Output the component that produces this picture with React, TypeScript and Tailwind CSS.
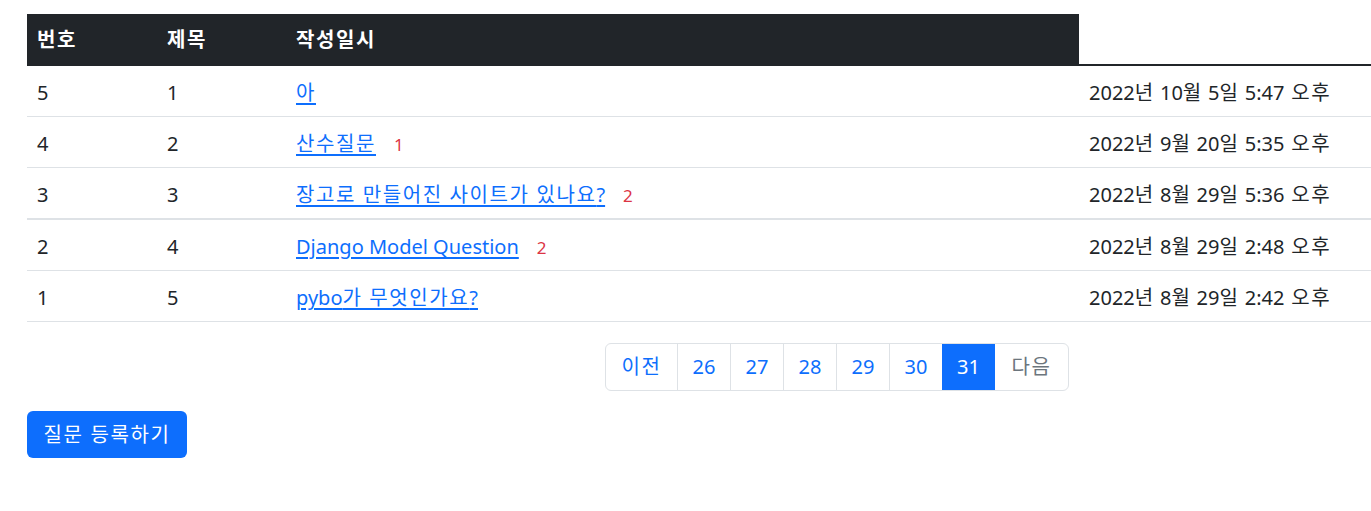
const ROWS = [
  { num: 5, idx: 1, title: '아', answers: 0, date: '2022년 10월 5일 5:47 오후' },
  { num: 4, idx: 2, title: '산수질문', answers: 1, date: '2022년 9월 20일 5:35 오후' },
  { num: 3, idx: 3, title: '장고로 만들어진 사이트가 있나요?', answers: 2, date: '2022년 8월 29일 5:36 오후' },
  { num: 2, idx: 4, title: 'Django Model Question', answers: 2, date: '2022년 8월 29일 2:48 오후' },
  { num: 1, idx: 5, title: 'pybo가 무엇인가요?', answers: 0, date: '2022년 8월 29일 2:42 오후' },
];

const PAGES = [26, 27, 28, 29, 30, 31];

// Noto CJK hangul is narrower than the screenshot's font: widen hangul runs a bit.
function Ko({ text }: { text: string }) {
  const parts = text.split(/([\uac00-\ud7a3 ]*[\uac00-\ud7a3])/);
  return (
    <>
      {parts.map((p, i) =>
        /[\uac00-\ud7a3]/.test(p) ? (
          <span key={i} className="tracking-[1.6px]">
            {p}
          </span>
        ) : (
          <span key={i}>{p}</span>
        ),
      )}
    </>
  );
}

export default function App() {
  const th = 'bg-[#212529] px-[10px] pt-[11px] pb-[9px] text-left font-bold text-white';
  return (
    <div
      className="bg-white pl-[27px] pt-[14px] text-[20px] leading-[30px] text-[#212529]"
      style={{ fontFamily: '"Noto Sans", "Noto Sans CJK KR", sans-serif' }}
    >
      <table className="w-[1344px] table-fixed border-separate border-spacing-0">
        <colgroup>
          <col className="w-[130px]" />
          <col className="w-[129px]" />
          <col className="w-[793px]" />
          <col className="w-[292px]" />
        </colgroup>
        <thead>
          <tr>
            <th className={th}><Ko text="번호" /></th>
            <th className={th}><Ko text="제목" /></th>
            <th className={th}><Ko text="작성일시" /></th>
          </tr>
        </thead>
        <tbody>
          {ROWS.map((r, i) => {
            const td =
              'px-[10px] pt-[12px] pb-[8px] border-[#dee2e6] ' +
              (i === 0 ? 'border-t-2 border-t-[#212529] ' : '') +
              (i === 2 ? 'border-b-2' : 'border-b');
            return (
              <tr key={r.num}>
                <td className={td}>{r.num}</td>
                <td className={td}>{r.idx}</td>
                <td className={td}>
                  <a href="#" className="text-[#0d6efd] underline decoration-[1.5px] underline-offset-[3px]">
                    <Ko text={r.title} />
                  </a>
                  {r.answers > 0 && (
                    <span className="ml-[18px] text-[17px] leading-none text-[#dc3545]">{r.answers}</span>
                  )}
                </td>
                <td className={td + ' whitespace-nowrap'}>
                  <Ko text={r.date} />
                </td>
              </tr>
            );
          })}
        </tbody>
      </table>

      <div className="ml-[578px] mt-[21px] flex h-[48px] w-[464px] items-stretch rounded-[6px] border border-[#dee2e6]">
        <span className="flex w-[71px] items-center justify-center text-[#0d6efd]">
          <Ko text="이전" />
        </span>
        {PAGES.map((p) => (
          <span
            key={p}
            className={
              p === 31
                ? 'flex w-[53px] items-center justify-center bg-[#0d6efd] text-white'
                : 'flex w-[53px] items-center justify-center border-l border-[#dee2e6] text-[#0d6efd]'
            }
          >
            {p}
          </span>
        ))}
        <span className="flex w-[73px] items-center justify-center text-[#6c757d]">
          <Ko text="다음" />
        </span>
      </div>

      <button className="mt-[20px] h-[47px] w-[160px] rounded-[6px] bg-[#0d6efd] text-white">
        <Ko text="질문 등록하기" />
      </button>
    </div>
  );
}
